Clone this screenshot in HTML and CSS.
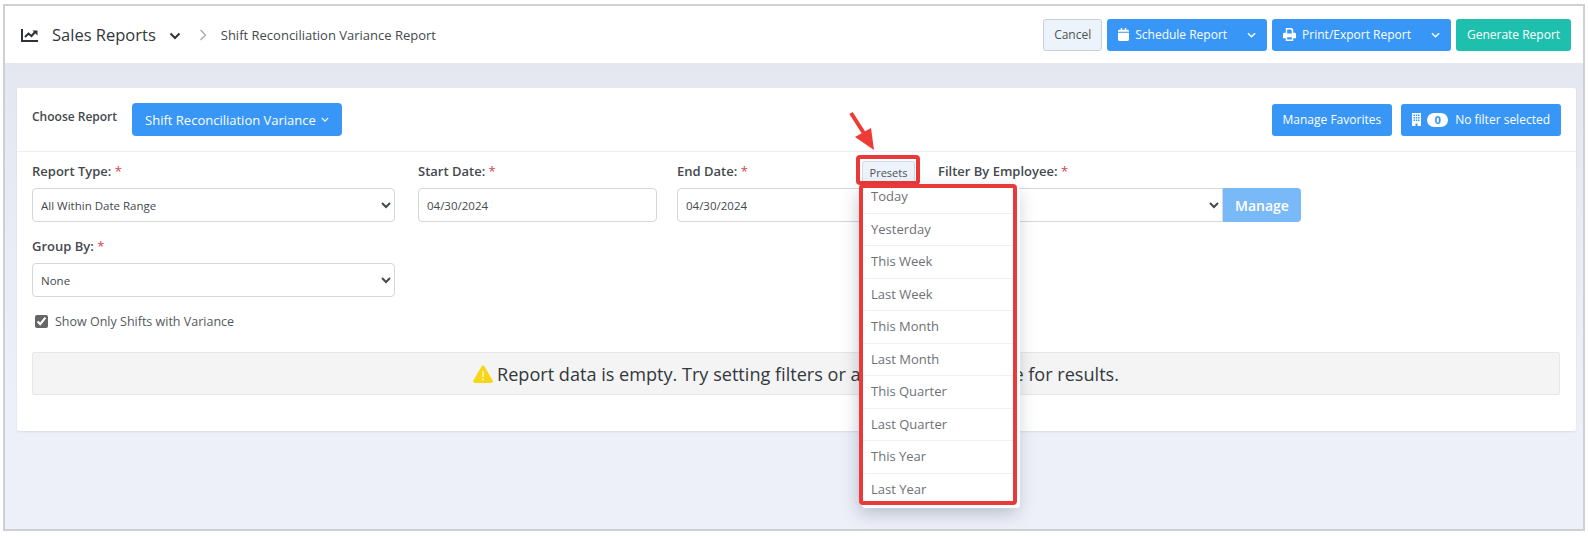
FILE: index.html
```html
<!DOCTYPE html>
<html lang="en">
<head>
<meta charset="utf-8">
<title>Shift Reconciliation Variance Report</title>
<link rel="stylesheet" href="styles.css">
</head>
<body>
<div class="frame">
  <header class="topbar">
    <svg class="ico-chart" viewBox="0 0 18 16" width="18" height="16"><path d="M1 2v12h16" fill="none" stroke="#2f3338" stroke-width="2"/><path d="M4 10l3.500-3.500 3 2.500 4-4.500" fill="none" stroke="#2f3338" stroke-width="2"/><path d="M11.500 3.500h5v5z" fill="#2f3338"/></svg>
    <h1 class="module">Sales Reports</h1>
    <svg class="ico-down" viewBox="0 0 12 8" width="12" height="8"><path d="M1.500 1.500L6 6l4.500-4.500" fill="none" stroke="#2f3338" stroke-width="2"/></svg>
    <svg class="ico-sep" viewBox="0 0 8 12" width="8" height="12"><path d="M1.500 1L6.500 6l-5 5" fill="none" stroke="#a6abb1" stroke-width="1.300"/></svg>
    <span class="crumb">Shift Reconciliation Variance Report</span>
    <div class="actions">
      <button class="btn btn-light">Cancel</button>
      <button class="btn btn-blue btn-split">
        <svg viewBox="0 0 12 14" width="11" height="13"><path d="M0 5h12v7.500a1.500 1.500 0 0 1-1.500 1.500h-9A1.500 1.500 0 0 1 0 12.500zM1.500 1.800H3V0h1.500v1.800h3V0H9v1.800h1.500A1.500 1.500 0 0 1 12 3.300V4H0v-.7a1.500 1.500 0 0 1 1.500-1.500z" fill="#fff"/></svg>
        <span>Schedule Report</span>
        <svg class="caret" viewBox="0 0 10 6" width="9" height="6"><path d="M1 1l4 4 4-4" fill="none" stroke="#fff" stroke-width="1.500"/></svg>
      </button>
      <button class="btn btn-blue btn-split">
        <svg viewBox="0 0 14 14" width="13" height="13"><path fill-rule="evenodd" d="M3 0h6.500L11 1.500V5h1.500A1.500 1.500 0 0 1 14 6.500V11h-3v3H3v-3H0V6.500A1.500 1.500 0 0 1 1.500 5H3zM4.500 1.500V6h5V2.500h-1v-1zM4.500 10v2.500h5V10z" fill="#fff"/></svg>
        <span>Print/Export Report</span>
        <svg class="caret" viewBox="0 0 10 6" width="9" height="6"><path d="M1 1l4 4 4-4" fill="none" stroke="#fff" stroke-width="1.500"/></svg>
      </button>
      <button class="btn btn-teal">Generate Report</button>
    </div>
  </header>

  <main class="content">
    <section class="card">
      <div class="card-head">
        <span class="choose">Choose Report</span>
        <button class="btn btn-blue btn-report">Shift Reconciliation Variance
          <svg viewBox="0 0 10 6" width="8" height="5"><path d="M1 1l4 4 4-4" fill="none" stroke="#fff" stroke-width="1.500"/></svg>
        </button>
        <div class="head-right">
          <button class="btn btn-blue">Manage Favorites</button>
          <button class="btn btn-blue btn-filter">
            <svg viewBox="0 0 9 13" width="9" height="13"><path fill-rule="evenodd" d="M0 0h9v13H5.500v-2.500h-2V13H0zM1.500 1.500v1.500H3V1.500zM3.800 1.500v1.500h1.400V1.500zM6 1.500v1.500h1.500V1.500zM1.500 4v1.500H3V4zM3.800 4v1.500h1.400V4zM6 4v1.500h1.500V4zM1.500 6.500V8H3V6.500zM3.800 6.500V8h1.400V6.500zM6 6.500V8h1.500V6.500z" fill="#fff"/></svg>
            <span class="pill">0</span>
            <span>No filter selected</span>
          </button>
        </div>
      </div>

      <div class="form-grid">
        <div class="field narrow">
          <label class="lbl">Report Type: <i>*</i></label>
          <select class="ctl"><option>All Within Date Range</option></select>
        </div>
        <div class="field">
          <label class="lbl">Start Date: <i>*</i></label>
          <input class="ctl" type="text" value="04/30/2024">
        </div>
        <div class="field">
          <label class="lbl">End Date: <i>*</i></label>
          <input class="ctl" type="text" value="04/30/2024">
        </div>
        <div class="field">
          <label class="lbl">Filter By Employee: <i>*</i></label>
          <div class="joined">
            <select class="ctl"><option></option></select>
            <button class="btn-manage">Manage</button>
          </div>
        </div>
        <div class="field narrow">
          <label class="lbl">Group By: <i>*</i></label>
          <select class="ctl"><option>None</option></select>
        </div>
      </div>

      <label class="check"><input type="checkbox" checked> Show Only Shifts with Variance</label>

      <div class="alert">
        <svg viewBox="0 0 20 18" width="20" height="18"><path d="M10 .5a1.600 1.600 0 0 1 1.400.8l8.200 14.200a1.600 1.600 0 0 1-1.400 2.400H1.800a1.600 1.600 0 0 1-1.400-2.400L8.600 1.300A1.600 1.600 0 0 1 10 .5z" fill="#f6d616"/><path d="M9 6h2v6H9zM9 13.200h2v2H9z" fill="#fbf0a0"/></svg>
        <span>Report data is empty. Try setting filters or adjusting date range for results.</span>
      </div>
    </section>
  </main>

  <button class="presets">Presets</button>
  <div class="hl-presets"></div>
  <div class="menu">
    <ul class="menu-list">
      <li>Today</li><li>Yesterday</li><li>This Week</li><li>Last Week</li><li>This Month</li>
      <li>Last Month</li><li>This Quarter</li><li>Last Quarter</li><li>This Year</li><li>Last Year</li>
    </ul>
  </div>
  <svg class="arrow" viewBox="0 0 30 42" width="30" height="42"><path d="M3 2l16 25" stroke="#ee3b36" stroke-width="4" fill="none"/><path d="M26 39L7 26l16-9z" fill="#ee3b36"/></svg>
</div>
</body>
</html>
```
FILE: styles.css
```css
* { box-sizing: border-box; }
html, body { margin: 0; height: 536px; overflow: hidden; background: #fff; }
body { padding: 4px 3px 5px; font-family: "Open Sans", "Liberation Sans", sans-serif; color: #3f4448; }

.frame { position: relative; height: 100%; border: 2px solid #cfd0d2; background: linear-gradient(#e3e5ef, #edf0f9 75%); overflow: hidden; }

.topbar { display: flex; align-items: center; height: 57px; padding: 0 12px 0 16px; background: #fff; }
.ico-chart { flex: none; margin-right: 13px; }
.module { margin: 0 13px 0 0; font-size: 16.500px; font-weight: 400; color: #33383d; }
.ico-down { flex: none; margin: 2px 18px 0 0; }
.ico-sep { flex: none; margin: 1px 14px 0 0; }
.crumb { font-size: 13px; color: #44494e; }
.actions { display: flex; gap: 5px; margin-left: auto; }

.btn { display: inline-flex; align-items: center; justify-content: center; height: 32px; padding: 0 10px; border: 1px solid transparent; border-radius: 3px; font-family: inherit; font-size: 12px; white-space: nowrap; color: #fff; }
.btn-blue { background: #3796f6; }
.btn-teal { width: 115px; padding: 0; background: #1fbfae; }
.btn-light { width: 59px; padding: 0; background: #edf3fa; border-color: #c6cfda; color: #4d5257; }
.btn-split { gap: 6px; }
.btn-split .caret { margin-left: 14px; }

.content { padding: 25px 7px 0 12px; }
.card { height: 343px; padding: 0 15px; background: #fff; border-radius: 2px; box-shadow: 0 1px 2px rgba(60, 70, 100, .12); }

.card-head { display: flex; align-items: center; height: 64px; margin: 0 -15px; padding: 0 15px; border-bottom: 1px solid #eceef1; }
.choose { margin: -6px 15px 0 0; font-size: 12px; font-weight: 600; color: #44494e; }
.btn-report { gap: 5px; height: 33px; padding: 0 12px; border-radius: 4px; font-size: 13px; }
.head-right { display: flex; gap: 9px; margin-left: auto; }
.btn-filter { gap: 6px; }
.pill { display: inline-block; width: 21px; height: 14px; margin-right: 1px; border-radius: 7px; background: #fff; color: #3796f6; font-size: 11px; font-weight: 700; line-height: 14px; text-align: center; }

.form-grid { display: grid; grid-template-columns: 366px 239px 241px 363px; column-gap: 20px; row-gap: 14px; padding-top: 9px; }
.field { display: flex; flex-direction: column; }
.narrow { padding-right: 3px; }
.lbl { height: 27px; font-size: 13px; font-weight: 600; line-height: 21px; color: #44494e; }
.lbl i { color: #d8414f; font-style: normal; font-weight: 400; }
.ctl { width: 100%; height: 34px; padding: 0 4px; border: 1px solid #d3d6da; border-radius: 4px; background: #fff; font-family: inherit; font-size: 11.500px; color: #44494e; }
input.ctl { padding: 0 8px; }
.joined { display: flex; }
.joined .ctl { border-radius: 4px 0 0 4px; }
.btn-manage { flex: none; width: 78px; height: 34px; border: 0; border-radius: 0 4px 4px 0; background: #7ab9f8; color: #fff; font-family: inherit; font-size: 14px; font-weight: 600; }

.check { display: flex; align-items: center; gap: 7px; margin: 16px 0 0 3px; font-size: 12.500px; color: #54595e; }
.check input { width: 13px; height: 13px; margin: 0; accent-color: #666; }

.alert { display: flex; align-items: center; justify-content: center; gap: 4px; height: 43px; margin: 22px 1px 0 0; background: #f4f4f4; border: 1px solid #e7e7e7; border-radius: 2px; font-size: 18.100px; color: #33383d; }

.presets { position: absolute; left: 857px; top: 155px; width: 53px; height: 22px; padding: 0; border: 1px solid #d5dce5; border-radius: 2px; background: #edf3fa; color: #4d5257; font-family: inherit; font-size: 11px; }
.hl-presets { position: absolute; left: 851px; top: 149px; width: 64px; height: 30px; border: 4px solid #e93a39; border-radius: 4px; }
.menu { position: absolute; left: 854px; top: 178px; width: 158px; height: 321px; overflow: hidden; background: #fff; border: 4px solid #e93a39; border-radius: 4px; box-shadow: 3px 3px 0 #fff, 0 8px 18px rgba(40, 50, 80, .28); }
.menu-list { margin: -7px 0 0; padding: 0; list-style: none; }
.menu-list li { height: 32.500px; padding: 0 8px; border-bottom: 1px solid #eef0f2; font-size: 13px; line-height: 31.500px; color: #6d7176; }
.arrow { position: absolute; left: 843px; top: 105px; }
```
